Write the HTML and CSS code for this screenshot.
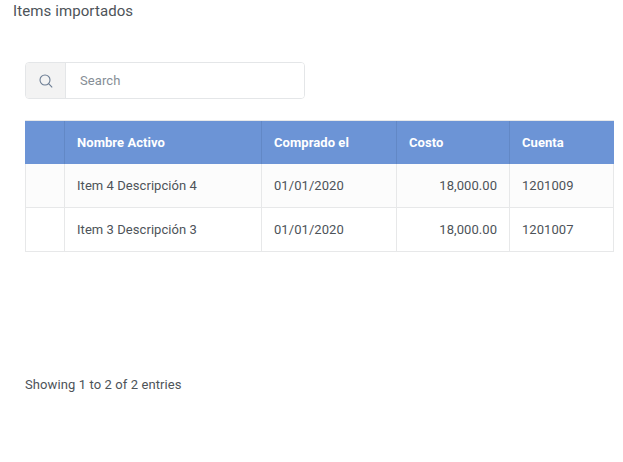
FILE: index.html
```html
<!DOCTYPE html>
<html lang="es">
<head>
<meta charset="utf-8">
<title>Items importados</title>
<link rel="stylesheet" href="styles.css">
</head>
<body>
<h1 class="title">Items importados</h1>
<main class="content">
  <div class="search">
    <span class="search-icon">
      <svg width="14" height="14" viewBox="0 0 14 14" fill="none" stroke="#6b7c93" stroke-width="1.1"><circle cx="6" cy="6" r="5"/><path d="M9.6 9.6L13.2 13.4"/></svg>
    </span>
    <input class="search-input" type="text" placeholder="Search">
  </div>
  <table class="grid">
    <colgroup><col class="c1"><col class="c2"><col class="c3"><col class="c4"><col class="c5"></colgroup>
    <thead>
      <tr><th></th><th>Nombre Activo</th><th>Comprado el</th><th>Costo</th><th>Cuenta</th></tr>
    </thead>
    <tbody>
      <tr class="odd"><td></td><td>Item 4 Descripción 4</td><td>01/01/2020</td><td class="num">18,000.00</td><td>1201009</td></tr>
      <tr><td></td><td>Item 3 Descripción 3</td><td>01/01/2020</td><td class="num">18,000.00</td><td>1201007</td></tr>
    </tbody>
  </table>
  <p class="info">Showing 1 to 2 of 2 entries</p>
</main>
</body>
</html>
```
FILE: styles.css
```css
* { box-sizing: border-box; }
html, body { margin: 0; background: #fff; }
body {
  width: 623px;
  height: 462px;
  overflow: hidden;
  font-family: Roboto, "Liberation Sans", sans-serif;
  color: #4d5359;
}
.title {
  margin: 0;
  padding: 3px 0 0 13px;
  font-size: 15px;
  font-weight: 400;
  line-height: 17px;
  letter-spacing: 0.1px;
  color: #4d5359;
}
.content { padding: 42px 9px 0 25px; }
.search {
  display: flex;
  width: 280px;
  height: 37px;
  border: 1px solid #e4e6e8;
  border-radius: 4px;
  overflow: hidden;
}
.search-icon {
  flex: 0 0 40px;
  display: flex;
  align-items: center;
  justify-content: center;
  background: #f3f3f3;
  border-right: 1px solid #e4e6e8;
}
.search-input {
  flex: 1;
  min-width: 0;
  border: 0;
  outline: 0;
  padding: 0 14px;
  font: 13px Roboto, "Liberation Sans", sans-serif;
  letter-spacing: 0.1px;
  color: #495057;
}
.search-input::placeholder { color: #868e96; opacity: 1; }
.grid {
  margin-top: 21px;
  width: 589px;
  table-layout: fixed;
  border-collapse: separate;
  border-spacing: 0;
  border-top: 1px solid #e7e8e9;
  font-size: 13px;
  letter-spacing: 0.06px;
}
.c1 { width: 40px; }
.c2 { width: 197px; }
.c3 { width: 135px; }
.c4 { width: 113px; }
.c5 { width: 104px; }
th, td {
  padding: 0 12px;
  text-align: left;
}
th {
  height: 43px;
  font-weight: 700;
  color: #fff;
  background: #6c94d6;
  border-right: 1px solid #6288c6;
}
th:first-child { border-left: 1px solid #6c94d6; }
th:last-child { border-right-color: #6c94d6; }
td {
  height: 44px;
  border-right: 1px solid #e7e8e9;
  border-bottom: 1px solid #e7e8e9;
}
td:first-child { border-left: 1px solid #e7e8e9; }
.odd td { background: #fcfcfc; }
td.num { text-align: right; }
.info {
  margin: 125px 0 0;
  font-size: 13px;
  line-height: 15px;
  letter-spacing: 0.1px;
  color: #4d5359;
}
```
